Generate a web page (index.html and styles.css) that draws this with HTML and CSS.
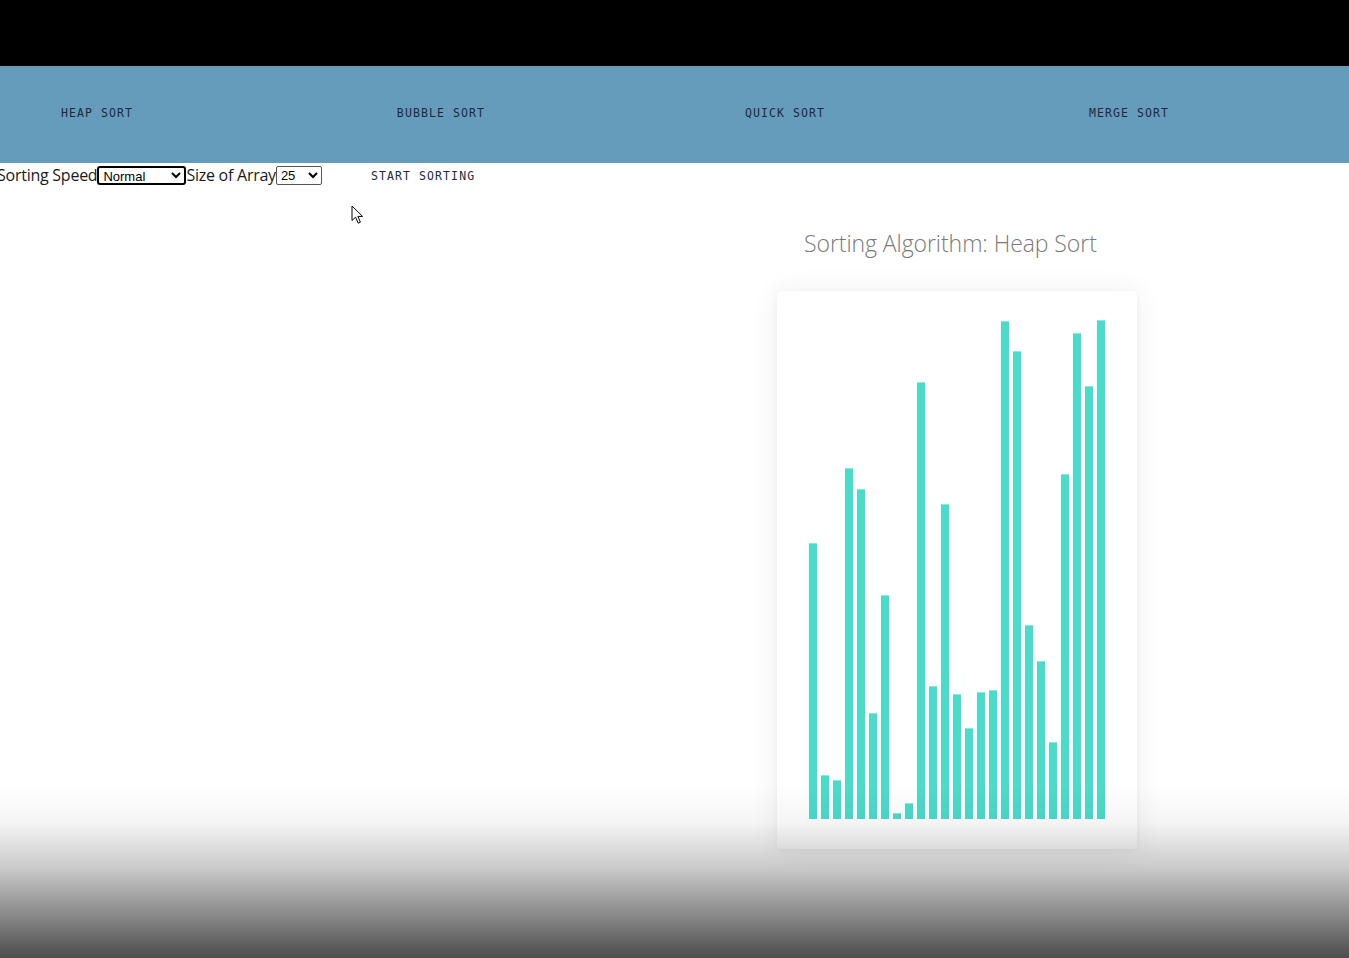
FILE: index.html
```html
<!DOCTYPE html>
<html lang="en">
<head>
<meta charset="utf-8">
<title>Sorting Visualizer</title>
<link rel="stylesheet" href="styles.css">
</head>
<body>
  <div class="topbar"></div>
  <nav class="nav">
    <button class="nav-btn">Heap Sort</button>
    <button class="nav-btn">Bubble Sort</button>
    <button class="nav-btn">Quick Sort</button>
    <button class="nav-btn">Merge Sort</button>
  </nav>
  <div class="controls">
    <label class="ctl-label">Sorting Speed</label>
    <select class="sel sel-speed">
      <option>Normal</option>
      <option>Slow</option>
      <option>Fast</option>
    </select>
    <label class="ctl-label">Size of Array</label>
    <select class="sel sel-size">
      <option>25</option>
      <option>50</option>
      <option>100</option>
    </select>
    <button class="start-btn">Start Sorting</button>
  </div>
  <main class="main">
    <section class="viz">
      <h2 class="title">Sorting Algorithm: Heap Sort</h2>
      <div class="card">
        <div class="bars">
          <div class="bar" style="height:276px"></div>
          <div class="bar" style="height:44px"></div>
          <div class="bar" style="height:39px"></div>
          <div class="bar" style="height:351px"></div>
          <div class="bar" style="height:330px"></div>
          <div class="bar" style="height:106px"></div>
          <div class="bar" style="height:224px"></div>
          <div class="bar" style="height:6px"></div>
          <div class="bar" style="height:16px"></div>
          <div class="bar" style="height:437px"></div>
          <div class="bar" style="height:133px"></div>
          <div class="bar" style="height:315px"></div>
          <div class="bar" style="height:125px"></div>
          <div class="bar" style="height:91px"></div>
          <div class="bar" style="height:127px"></div>
          <div class="bar" style="height:129px"></div>
          <div class="bar" style="height:498px"></div>
          <div class="bar" style="height:468px"></div>
          <div class="bar" style="height:194px"></div>
          <div class="bar" style="height:158px"></div>
          <div class="bar" style="height:77px"></div>
          <div class="bar" style="height:345px"></div>
          <div class="bar" style="height:486px"></div>
          <div class="bar" style="height:433px"></div>
          <div class="bar" style="height:499px"></div>
        </div>
      </div>
    </section>
  </main>
  <svg class="cursor" width="14" height="20" viewBox="0 0 14 20">
    <path d="M1 1 L1 15.5 L4.6 12.2 L7.2 18.2 L9.4 17.2 L6.9 11.4 L11.6 11.4 Z" fill="#fff" stroke="#000" stroke-width="1" stroke-linejoin="miter"/>
  </svg>
  <div class="shade"></div>
</body>
</html>
```

FILE: styles.css
```css
* { box-sizing: border-box; }

html, body {
  margin: 0;
  padding: 0;
  background: #fff;
  overflow: hidden;
}

body {
  width: 1349px;
  height: 958px;
  position: relative;
  font-family: "Open Sans", "Noto Sans", sans-serif;
}

.topbar {
  height: 66px;
  background: #000;
}

.nav {
  height: 97px;
  background: #659cbc;
  display: flex;
  align-items: center;
  gap: 184px;
  padding-left: 17px;
  padding-bottom: 3px;
}

.nav-btn {
  width: 160px;
  background: none;
  border: 0;
  padding: 0;
  margin: 0;
  text-align: center;
  text-transform: uppercase;
  font-family: "DejaVu Sans Mono", "Liberation Mono", monospace;
  font-size: 11.5px;
  letter-spacing: 1.1px;
  color: #1b2b3b;
  line-height: 14px;
}

.controls {
  height: 25px;
  display: flex;
  align-items: center;
  margin-left: -3px;
}

.ctl-label {
  font-family: "Open Sans", "Noto Sans", sans-serif;
  font-size: 16px;
  color: #1a1a1a;
  line-height: 20px;
  letter-spacing: -0.25px;
  margin-top: -2px;
}

.sel {
  height: 19px;
  font-family: "Liberation Sans", Arial, sans-serif;
  font-size: 13px;
  color: #000;
  background: #fff;
  padding: 0;
  margin: 0;
}

.sel-speed {
  width: 89px;
  border: 2px solid #000;
  border-radius: 3px;
}

.sel-size {
  width: 46px;
  border: 1px solid #555;
  border-radius: 2px;
}

.start-btn {
  margin-left: 49px;
  background: none;
  border: 0;
  padding: 0;
  text-transform: uppercase;
  font-family: "DejaVu Sans Mono", "Liberation Mono", monospace;
  font-size: 11.5px;
  letter-spacing: 1.1px;
  color: #1b2b3b;
}

.main {
  display: flex;
  padding-left: 777px;
}

.viz {
  width: 360px;
  display: flex;
  flex-direction: column;
}

.title {
  margin: 38px 0 0 27px;
  height: 65px;
  font-family: "Open Sans", "Noto Sans", sans-serif;
  font-weight: 300;
  font-size: 23px;
  line-height: 34px;
  letter-spacing: -0.07px;
  color: #7a7a7a;
  white-space: nowrap;
}

.card {
  background: #fff;
  border-radius: 4px;
  box-shadow: 0 0 28px rgba(0, 0, 0, 0.07), 0 2px 6px rgba(0, 0, 0, 0.04);
  padding: 29px 32px 30px;
}

.bars {
  height: 499px;
  display: flex;
  align-items: flex-end;
  gap: 4px;
}

.bar {
  width: 8px;
  background: #4adccb;
  border-top: 1px solid #8ae9dd;
}

.cursor {
  position: absolute;
  left: 351px;
  top: 205px;
}

.shade {
  position: absolute;
  left: 0;
  right: 0;
  bottom: 0;
  height: 175px;
  pointer-events: none;
  background: linear-gradient(to bottom,
    rgba(0, 0, 0, 0) 0%,
    rgba(0, 0, 0, 0.04) 22%,
    rgba(0, 0, 0, 0.22) 50%,
    rgba(0, 0, 0, 0.46) 75%,
    rgba(0, 0, 0, 0.7) 100%);
}
```
